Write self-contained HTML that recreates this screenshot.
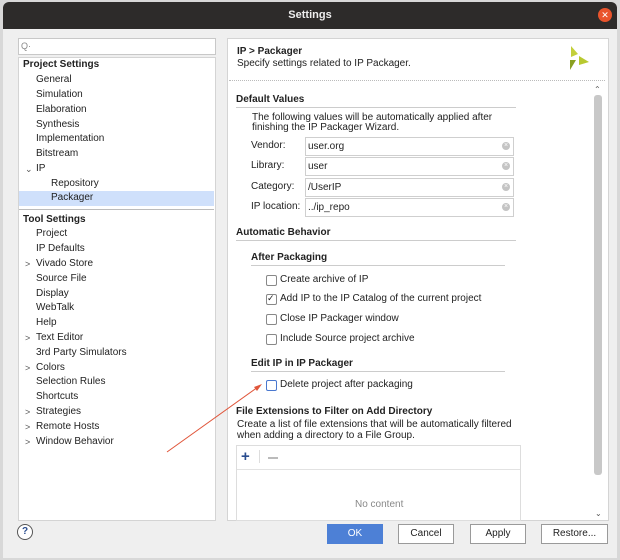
<!DOCTYPE html>
<html><head><style>
body{margin:0;width:620px;height:560px;background:#d8d8d8;font-family:"Liberation Sans","DejaVu Sans",sans-serif;font-size:10px;color:#222;position:relative;overflow:hidden}
.a{position:absolute;white-space:nowrap;line-height:12px}
.b{font-weight:bold}
.dlg{position:absolute;left:3px;top:2px;width:614px;height:556px;background:#efefef;border-radius:6px 6px 0 0;overflow:hidden}
.tb{position:absolute;left:0;top:0;width:614px;height:27px;background:#2d2b2a;color:#eee;font-weight:bold;font-size:11px;text-align:center;line-height:27px}
.box{position:absolute;background:#fff;border:1px solid #d4d4d4}
.sel{position:absolute;left:19px;top:191px;width:195px;height:15px;background:#cfe0fb}
.inp{position:absolute;left:305px;width:207px;height:17px;background:#fff;border:1px solid #cfcfcf}
.inp span{position:absolute;left:2px;top:3px;font-size:10px}
.inp i{position:absolute;right:3px;top:4px;width:8px;height:8px;border-radius:50%;background:#c4c4c4;color:#fff;font-style:normal;font-size:7px;line-height:8px;text-align:center}
.cb{position:absolute;left:266px;width:9px;height:9px;border:1px solid #888;border-radius:2px;background:#fff}
.hl{position:absolute;height:1px;background:#ccc}
.btn{position:absolute;top:524px;height:18px;border:1px solid #9a9a9a;background:#fff;text-align:center;line-height:18px;font-size:10px}
.chev{position:absolute;left:25px;font-size:9px;color:#555}
</style></head><body>
<div class="dlg">
<div class="tb">Settings</div>
<div style="position:absolute;left:595px;top:6px;width:14px;height:14px;border-radius:50%;background:#e9542c;color:#fff;font-size:9px;line-height:14px;text-align:center">✕</div>
</div>
<div class="box" style="left:18px;top:38px;width:196px;height:15px;border-color:#c8c8c8"></div>
<div class="a" style="left:21px;top:40px;color:#888;font-size:9px">Q·</div>
<div class="box" style="left:18px;top:57px;width:196px;height:462px"></div>
<div class="sel"></div>
<div class="hl" style="left:19px;top:209px;width:195px;background:#bbb"></div>
<div class="a b" style="left:23px;top:59px">Project Settings</div>
<div class="a" style="left:36px;top:74px">General</div>
<div class="a" style="left:36px;top:89px">Simulation</div>
<div class="a" style="left:36px;top:104px">Elaboration</div>
<div class="a" style="left:36px;top:119px">Synthesis</div>
<div class="a" style="left:36px;top:133px">Implementation</div>
<div class="a" style="left:36px;top:148px">Bitstream</div>
<div class="chev a" style="top:163px">⌄</div>
<div class="a" style="left:36px;top:163px">IP</div>
<div class="a" style="left:51px;top:178px">Repository</div>
<div class="a" style="left:51px;top:192px">Packager</div>
<div class="a b" style="left:23px;top:214px">Tool Settings</div>
<div class="a" style="left:36px;top:228px">Project</div>
<div class="a" style="left:36px;top:243px">IP Defaults</div>
<div class="chev a" style="top:258px">&gt;</div><div class="a" style="left:36px;top:258px">Vivado Store</div>
<div class="a" style="left:36px;top:273px">Source File</div>
<div class="a" style="left:36px;top:288px">Display</div>
<div class="a" style="left:36px;top:302px">WebTalk</div>
<div class="a" style="left:36px;top:317px">Help</div>
<div class="chev a" style="top:332px">&gt;</div><div class="a" style="left:36px;top:332px">Text Editor</div>
<div class="a" style="left:36px;top:347px">3rd Party Simulators</div>
<div class="chev a" style="top:362px">&gt;</div><div class="a" style="left:36px;top:362px">Colors</div>
<div class="a" style="left:36px;top:376px">Selection Rules</div>
<div class="a" style="left:36px;top:391px">Shortcuts</div>
<div class="chev a" style="top:406px">&gt;</div><div class="a" style="left:36px;top:406px">Strategies</div>
<div class="chev a" style="top:421px">&gt;</div><div class="a" style="left:36px;top:421px">Remote Hosts</div>
<div class="chev a" style="top:436px">&gt;</div><div class="a" style="left:36px;top:436px">Window Behavior</div>

<div class="box" style="left:227px;top:38px;width:380px;height:481px"></div>
<div class="a b" style="left:237px;top:46px">IP &gt; Packager</div>
<div class="a" style="left:237px;top:58px">Specify settings related to IP Packager.</div>
<svg style="position:absolute;left:566px;top:46px" width="24" height="24" viewBox="0 0 24 24"><polygon points="5,0 12,8 5,11" fill="#c3cf3b"/><polygon points="4,14 10,14 4,24" fill="#8aa021"/><polygon points="13,10 23,16 13,19" fill="#b8c930"/></svg>
<div style="position:absolute;left:229px;top:80px;width:376px;border-top:1px dotted #bbb"></div>
<div style="position:absolute;left:594px;top:95px;width:8px;height:380px;background:#c8c8c8;border-radius:3px"></div>
<div class="a" style="left:594px;top:84px;font-size:8px;color:#555">⌃</div>
<div class="a" style="left:595px;top:508px;font-size:8px;color:#555">⌄</div>

<div class="a b" style="left:236px;top:94px">Default Values</div>
<div class="hl" style="left:236px;top:107px;width:280px"></div>
<div class="a" style="left:252px;top:112px">The following values will be automatically applied after</div>
<div class="a" style="left:252px;top:122px">finishing the IP Packager Wizard.</div>
<div class="a" style="left:251px;top:140px">Vendor:</div><div class="inp" style="top:137px"><span>user.org</span><i>×</i></div>
<div class="a" style="left:251px;top:160px">Library:</div><div class="inp" style="top:157px"><span>user</span><i>×</i></div>
<div class="a" style="left:251px;top:181px">Category:</div><div class="inp" style="top:178px"><span>/UserIP</span><i>×</i></div>
<div class="a" style="left:251px;top:201px">IP location:</div><div class="inp" style="top:198px"><span>../ip_repo</span><i>×</i></div>
<div class="a b" style="left:236px;top:227px">Automatic Behavior</div>
<div class="hl" style="left:236px;top:240px;width:280px"></div>
<div class="a b" style="left:251px;top:252px">After Packaging</div>
<div class="hl" style="left:251px;top:265px;width:254px"></div>
<div class="cb" style="top:275px"></div><div class="a" style="left:280px;top:274px">Create archive of IP</div>
<div class="cb" style="top:294px"></div><div class="a" style="left:267px;top:292px;font-size:9px">✓</div><div class="a" style="left:280px;top:293px">Add IP to the IP Catalog of the current project</div>
<div class="cb" style="top:314px"></div><div class="a" style="left:280px;top:313px">Close IP Packager window</div>
<div class="cb" style="top:334px"></div><div class="a" style="left:280px;top:333px">Include Source project archive</div>
<div class="a b" style="left:251px;top:358px">Edit IP in IP Packager</div>
<div class="hl" style="left:251px;top:371px;width:254px"></div>
<div class="cb" style="top:380px;border-color:#4a78cf;border-width:1.5px"></div><div class="a" style="left:280px;top:379px">Delete project after packaging</div>
<div class="a b" style="left:236px;top:406px">File Extensions to Filter on Add Directory</div>
<div class="a" style="left:237px;top:419px">Create a list of file extensions that will be automatically filtered</div>
<div class="a" style="left:237px;top:430px">when adding a directory to a File Group.</div>
<div class="box" style="left:236px;top:445px;width:283px;height:74px;border-color:#ddd"></div>
<div class="hl" style="left:237px;top:469px;width:283px;background:#e2e2e2"></div>
<div class="a b" style="left:241px;top:449px;font-size:15px;color:#2a4d8f;line-height:16px">+</div>
<div style="position:absolute;left:259px;top:450px;width:1px;height:13px;background:#ddd"></div>
<div style="position:absolute;left:268px;top:457px;width:10px;height:2px;background:#bbb"></div>
<div class="a" style="left:355px;top:499px;color:#888">No content</div>

<svg style="position:absolute;left:0;top:0" width="620" height="560"><line x1="167" y1="452" x2="258" y2="387" stroke="#e0553a" stroke-width="1"/><polygon points="262,384 254,387 257,391" fill="#e0553a"/></svg>

<div style="position:absolute;left:17px;top:524px;width:14px;height:14px;border:1px solid #555;border-radius:50%;background:#fff;text-align:center;line-height:14px;font-size:10px;font-weight:bold;color:#2a4d8f">?</div>
<div class="btn" style="left:327px;width:54px;background:#4d80d6;border-color:#4d80d6;color:#fff">OK</div>
<div class="btn" style="left:398px;width:54px">Cancel</div>
<div class="btn" style="left:470px;width:54px">Apply</div>
<div class="btn" style="left:541px;width:65px">Restore...</div>
</body></html>
